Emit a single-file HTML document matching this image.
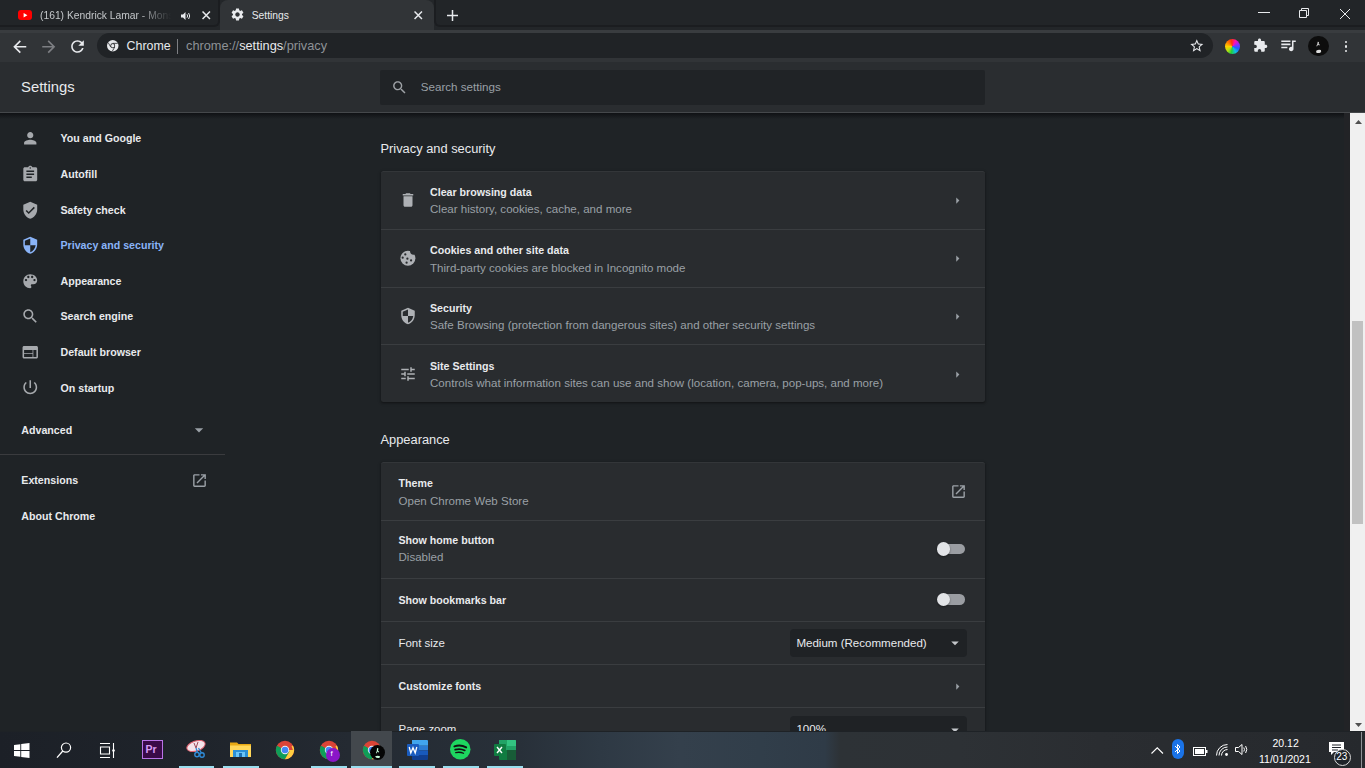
<!DOCTYPE html>
<html><head><meta charset="utf-8">
<style>
*{margin:0;padding:0;box-sizing:border-box}
html,body{width:1365px;height:768px;overflow:hidden;background:#1f2326;font-family:"Liberation Sans",sans-serif;color:#e8eaed}
.a{position:absolute}
.t{position:absolute;white-space:nowrap;line-height:1}
svg{position:absolute;display:block;overflow:visible}
#frame{left:0;top:0;width:1365px;height:30px;background:#232629}
#tab{left:220px;top:0;width:214px;height:31px;background:#313437;border-radius:8px 8px 0 0}
#toolbar{left:0;top:30px;width:1365px;height:32px;background:linear-gradient(#393c3f 0,#393c3f 3px,#313437 3px)}
#omni{left:96.5px;top:33px;width:1116px;height:25px;background:#202326;border-radius:12.5px}
#hdr{left:0;top:62px;width:1365px;height:51px;background:#2a2d30;border-bottom:1px solid #45484b}
#hdrshadow{left:0;top:113px;width:1344px;height:6px;background:linear-gradient(#0f1114,rgba(31,35,38,0))}
#search{left:380px;top:70px;width:605px;height:34.5px;background:#202326;border-radius:2px}
.nav{font-size:10.65px;font-weight:700;color:#e8eaed;left:60.5px}
.card{position:absolute;left:381px;width:604px;background:#292c2f;border-radius:2.5px;box-shadow:inset 0 1px 0 rgba(255,255,255,.05),0 1px 2px rgba(0,0,0,.3),0 1px 3px 1px rgba(0,0,0,.15)}
.sep{position:absolute;left:381px;width:604px;height:1px;background:#3a3d40}
.ttl{font-size:10.65px;font-weight:700;color:#e8eaed}
.sub{font-size:11.55px;color:#9aa0a6}
.hd{font-size:12.85px;color:#e8eaed}
#sb{left:1350px;top:112.5px;width:15px;height:620px;background:#f0f0f0}
#thumb{left:1352px;top:321px;width:11px;height:203px;background:#c1c1c1}
#task{left:0;top:732px;width:1365px;height:36px;background:linear-gradient(90deg,#1c2027 0,#1f242b 200px,#242a32 350px,#283039 520px,#2e3944 600px,#34404c 680px,#313e4a 760px,#2f3b47 825px,#2d3236 840px,#2d3135 960px,#2a2d31 1100px,#26292d 1365px)}
</style></head><body>
<div id="frame" class="a"></div>
<div class="a" style="left:-10px;top:-5px;width:230px;height:32px;border-right:2px solid #1b1d20;border-bottom:2.5px solid #1b1d20;border-bottom-right-radius:6px;background:#222528"></div>
<div class="a" style="left:434px;top:-5px;width:940px;height:32px;border-left:2.5px solid #1b1d20;border-bottom:2.5px solid #1b1d20;border-bottom-left-radius:6px;background:#222528"></div>
<div id="tab" class="a"></div>
<div id="toolbar" class="a"></div>
<div id="omni" class="a"></div>

<div class="a" style="left:18px;top:9.5px;width:14px;height:10.5px;background:#f00;border-radius:3px"></div>
<svg style="left:18px;top:9.5px" width="14" height="10.5" viewBox="0 0 14 10.5"><path fill="#fff" d="M5.6 3v4.5L9.4 5.25z"/></svg>
<div class="t" style="left:40px;top:10.8px;font-size:10.3px;color:#c4c7ca;width:134px;overflow:hidden;-webkit-mask-image:linear-gradient(90deg,#000 72%,transparent 98%)">(161) Kendrick Lamar - Monster (Official Video)</div>
<svg style="left:181px;top:11.5px" width="10" height="8" viewBox="0 0 10 8"><path fill="#e8eaed" d="M0 2.5h2L4.5 0v8L2 5.5H0z"/><path fill="none" stroke="#e8eaed" stroke-width="1" d="M6 2.3q1.2 1.7 0 3.4M7.6 1q2.2 3 0 6"/></svg>
<svg style="left:202px;top:11px" width="8.5" height="8.5" viewBox="0 0 8 8"><path stroke="#e8eaed" stroke-width="1.4" d="M0.5 .5l7 7M7.5 .5l-7 7"/></svg>
<svg style="left:229.8px;top:7.3px" width="15" height="15" viewBox="0 0 24 24"><path fill="#e8eaed" d="M19.14 12.94c.04-.3.06-.61.06-.94 0-.32-.02-.64-.07-.94l2.03-1.58c.18-.14.23-.41.12-.61l-1.92-3.32c-.12-.22-.37-.29-.59-.22l-2.39.96c-.5-.38-1.03-.7-1.62-.94l-.36-2.54c-.04-.24-.24-.41-.48-.41h-3.84c-.24 0-.43.17-.47.41l-.36 2.54c-.59.24-1.13.57-1.62.94l-2.390-.96c-.22-.08-.47 0-.59.22L2.74 8.87c-.12.21-.08.47.12.61l2.03 1.58c-.05.3-.09.63-.09.94s.02.64.07.94l-2.03 1.58c-.18.14-.23.41-.12.61l1.92 3.32c.12.22.37.29.59.22l2.39-.96c.5.38 1.03.7 1.62.94l.36 2.54c.05.24.24.41.48.41h3.84c.24 0 .44-.17.47-.41l.36-2.54c.59-.24 1.13-.56 1.62-.94l2.39.96c.22.08.47 0 .59-.22l1.92-3.32c.12-.22.07-.47-.12-.61l-2.01-1.58zM12 15.6c-1.98 0-3.6-1.62-3.6-3.6s1.62-3.6 3.6-3.6 3.6 1.62 3.6 3.6-1.62 3.6-3.6 3.6z"/></svg>
<div class="t" style="left:251.7px;top:10.8px;font-size:10.3px;color:#e8eaed">Settings</div>
<svg style="left:414.4px;top:10.8px" width="8.5" height="8.5" viewBox="0 0 8 8"><path stroke="#e8eaed" stroke-width="1.4" d="M0.5 .5l7 7M7.5 .5l-7 7"/></svg>
<svg style="left:447px;top:9.5px" width="11" height="11" viewBox="0 0 11 11"><path stroke="#e8eaed" stroke-width="1.5" d="M5.5 0v11M0 5.5h11"/></svg>
<div class="a" style="left:1258px;top:12px;width:12px;height:1px;background:#e8eaed"></div>
<svg style="left:1299px;top:8px" width="10" height="10" viewBox="0 0 10 10"><path fill="none" stroke="#e8eaed" stroke-width="1" d="M.5 2.5h7v7h-7z M2.5 2.5v-2h7v7h-2"/></svg>
<svg style="left:1340px;top:8.5px" width="10" height="10" viewBox="0 0 10 10"><path stroke="#e8eaed" stroke-width="1" d="M0 0l10 10M10 0L0 10"/></svg>
<svg style="left:9.75px;top:36.75px" width="19.5" height="19.5" viewBox="0 0 24 24"><path fill="#e8eaed" d="M20 11H7.83l5.59-5.59L12 4l-8 8 8 8 1.41-1.41L7.83 13H20v-2z"/></svg>
<svg style="left:38.5px;top:36.75px" width="19.5" height="19.5" viewBox="0 0 24 24"><path fill="#7d7f83" d="M12 4l-1.41 1.41L16.17 11H4v2h12.17l-5.58 5.59L12 20l8-8z"/></svg>
<svg style="left:67.6px;top:37.2px" width="19" height="19" viewBox="0 0 24 24"><path fill="#e8eaed" d="M17.65 6.35C16.2 4.9 14.21 4 12 4c-4.42 0-7.99 3.58-7.99 8s3.57 8 7.99 8c3.73 0 6.84-2.55 7.73-6h-2.08c-.82 2.33-3.04 4-5.65 4-3.31 0-6-2.69-6-6s2.69-6 6-6c1.66 0 3.14.69 4.22 1.78L13 11h7V4l-2.35 2.35z"/></svg>
<svg style="left:106.5px;top:40px" width="11.5" height="11.5" viewBox="0 0 24 24"><circle cx="12" cy="12" r="12" fill="#e8eaed"/><circle cx="12" cy="12" r="5" fill="#202124"/><circle cx="12" cy="12" r="3.4" fill="#e8eaed"/><path stroke="#202124" stroke-width="1.6" fill="none" d="M12 7h10.5M7.7 14.5L2.5 5.5M16.3 14.5L11 23.5"/></svg>
<div class="t" style="left:126.6px;top:40.1px;font-size:12.4px;color:#e8eaed">Chrome</div>
<div class="a" style="left:176.5px;top:38.5px;width:1px;height:15px;background:#7d7f83"></div>
<div class="t" style="left:186px;top:39.9px;font-size:12.75px;color:#8e9296">chrome://<span style="color:#e8eaed">settings</span>/privacy</div>
<svg style="left:1188.7px;top:38.3px" width="15.6" height="15.6" viewBox="0 0 24 24"><path fill="#e8eaed" d="M22 9.24l-7.19-.62L12 2 9.19 8.63 2 9.24l5.46 4.73L5.82 21 12 17.27 18.18 21l-1.63-7.03L22 9.24zM12 15.4l-3.76 2.27 1-4.28-3.32-2.88 4.38-.38L12 6.1l1.71 4.04 4.38.38-3.32 2.88 1 4.28L12 15.4z"/></svg>
<div class="a" style="left:1224.5px;top:38.5px;width:15px;height:15px;border-radius:50%;background:conic-gradient(from -10deg,#ff3010,#ff10b0,#8a2cff,#2060ff,#10c0e0,#20d040,#b8e010,#ffd000,#ff8000,#ff3010)"></div>
<svg style="left:1252.8px;top:38.4px" width="14.9" height="14.9" viewBox="0 0 24 24"><path fill="#e8eaed" d="M20.5 11H19V7c0-1.1-.9-2-2-2h-4V3.5C13 2.12 11.88 1 10.5 1S8 2.12 8 3.5V5H4c-1.1 0-1.99.9-1.99 2v3.8H3.5c1.49 0 2.7 1.21 2.7 2.7s-1.21 2.7-2.7 2.7H2V20c0 1.1.9 2 2 2h3.8v-1.5c0-1.49 1.21-2.7 2.7-2.7 1.49 0 2.7 1.21 2.7 2.7V22H17c1.1 0 2-.9 2-2v-4h1.5c1.38 0 2.5-1.12 2.5-2.5S21.88 11 20.5 11z"/></svg>
<svg style="left:1279.2px;top:35.7px" width="18.3" height="18.3" viewBox="0 0 24 24"><path fill="#e8eaed" d="M15 6H3v2h12V6zm0 4H3v2h12v-2zM3 16h8v-2H3v2zM17 6v8.18c-.31-.11-.65-.18-1-.18-1.66 0-3 1.34-3 3s1.34 3 3 3 3-1.34 3-3V8h3V6h-5z"/></svg>
<div class="a" style="left:1308px;top:35.5px;width:20.5px;height:20.5px;border-radius:50%;background:#0d0d0d"></div>
<svg style="left:1308px;top:35.5px" width="20.5" height="20.5" viewBox="0 0 20 20"><path fill="#ddd" d="M9.5 5.5l1.2 .3-.3 1.6 1.2 1.5-.8.4-1-1-.9 1.8h-.8l1-2.3z M8 14.5q2-1.5 4.5-.8q1 1.5-.5 2.6q-2.5.8-4-.3z"/></svg>
<div class="a" style="left:1344.8px;top:40.5px;width:2.6px;height:2.6px;border-radius:50%;background:#e8eaed"></div>
<div class="a" style="left:1344.8px;top:45px;width:2.6px;height:2.6px;border-radius:50%;background:#e8eaed"></div>
<div class="a" style="left:1344.8px;top:49.5px;width:2.6px;height:2.6px;border-radius:50%;background:#e8eaed"></div>
<div id="hdr" class="a"></div>
<div id="hdrshadow" class="a"></div>
<div id="search" class="a"></div>
<div class="t" style="left:21px;top:80.1px;font-size:14.83px">Settings</div>
<svg style="left:390.5px;top:78.6px" width="17" height="17" viewBox="0 0 24 24"><path fill="#9ea2a6" d="M15.5 14h-.79l-.28-.27C15.41 12.59 16 11.110 16 9.5 16 5.91 13.09 3 9.5 3S3 5.91 3 9.5 5.91 16 9.5 16c1.61 0 3.09-.59 4.23-1.57l.27.28v.79l5 4.99L20.49 19l-4.99-5zm-6 0C7.01 14 5 11.99 5 9.5S7.01 5 9.5 5 14 7.01 14 9.5 11.99 14 9.5 14z"/></svg>
<div class="t" style="left:420.8px;top:81.2px;font-size:11.6px;color:#9aa0a6">Search settings</div>

<!-- SIDEBAR -->
<div class="t nav" style="top:133.4px">You and Google</div>
<div class="t nav" style="top:169.3px">Autofill</div>
<div class="t nav" style="top:204.7px">Safety check</div>
<div class="t nav" style="top:240.3px;color:#8ab4f8">Privacy and security</div>
<div class="t nav" style="top:275.7px">Appearance</div>
<div class="t nav" style="top:310.9px">Search engine</div>
<div class="t nav" style="top:346.8px">Default browser</div>
<div class="t nav" style="top:382.6px">On startup</div>
<div class="t nav" style="top:424.7px;left:21.3px">Advanced</div>
<div class="t nav" style="top:475.2px;left:21.3px">Extensions</div>
<div class="t nav" style="top:511.2px;left:21.3px">About Chrome</div>
<div class="a" style="left:0;top:454px;width:225px;height:1px;background:#3a3b3e"></div>

<!-- MAIN -->
<div class="t hd" style="left:380.5px;top:143px">Privacy and security</div>
<div class="card" style="top:171px;height:231px"></div>
<div class="sep" style="top:229px"></div>
<div class="sep" style="top:287px"></div>
<div class="sep" style="top:344px"></div>
<div class="t ttl" style="left:430px;top:186.9px">Clear browsing data</div>
<div class="t sub" style="left:430px;top:204.3px">Clear history, cookies, cache, and more</div>
<div class="t ttl" style="left:430px;top:244.7px">Cookies and other site data</div>
<div class="t sub" style="left:430px;top:262.9px">Third-party cookies are blocked in Incognito mode</div>
<div class="t ttl" style="left:430px;top:303.4px">Security</div>
<div class="t sub" style="left:430px;top:320.3px">Safe Browsing (protection from dangerous sites) and other security settings</div>
<div class="t ttl" style="left:430px;top:360.9px">Site Settings</div>
<div class="t sub" style="left:430px;top:378.3px">Controls what information sites can use and show (location, camera, pop-ups, and more)</div>

<div class="t hd" style="left:380.5px;top:433.5px">Appearance</div>
<div class="card" style="top:462px;height:320px"></div>
<div class="sep" style="top:520px"></div>
<div class="sep" style="top:578px"></div>
<div class="sep" style="top:621px"></div>
<div class="sep" style="top:664px"></div>
<div class="sep" style="top:707px"></div>
<div class="t ttl" style="left:398.5px;top:478.3px">Theme</div>
<div class="t sub" style="left:398.5px;top:495.5px">Open Chrome Web Store</div>
<div class="t ttl" style="left:398.5px;top:535.3px">Show home button</div>
<div class="t sub" style="left:398.5px;top:552.3px">Disabled</div>
<div class="t ttl" style="left:398.5px;top:595.4px">Show bookmarks bar</div>
<div class="t" style="left:398.5px;top:637.9px;font-size:11.45px">Font size</div>
<div class="t ttl" style="left:398.5px;top:681.4px">Customize fonts</div>
<div class="t" style="left:398.5px;top:723.9px;font-size:11.45px">Page zoom</div>

<div class="a" style="left:790px;top:629px;width:177px;height:28px;background:#1f2225;border-radius:4px"></div>
<div class="t" style="left:796.4px;top:637.9px;font-size:11.56px">Medium (Recommended)</div>
<div class="a" style="left:790px;top:716px;width:177px;height:28px;background:#1f2225;border-radius:4px"></div>
<div class="t" style="left:796.4px;top:723.9px;font-size:11.56px">100%</div>

<svg style="left:20.75px;top:129.25px" width="18.5" height="18.5" viewBox="0 0 24 24"><path fill="#a6a9ad" d="M12 12c2.21 0 4-1.790 4-4s-1.79-4-4-4-4 1.79-4 4 1.79 4 4 4zm0 2c-2.670 0-8 1.34-8 4v2h16v-2c0-2.66-5.33-4-8-4z"/></svg>
<svg style="left:20.75px;top:165.15px" width="18.5" height="18.5" viewBox="0 0 24 24"><path fill="#a6a9ad" d="M19 3h-4.18C14.4 1.84 13.3 1 12 1c-1.3 0-2.4.84-2.82 2H5c-1.1 0-2 .9-2 2v14c0 1.1.9 2 2 2h14c1.1 0 2-.9 2-2V5c0-1.1-.9-2-2-2zm-7 0c.55 0 1 .45 1 1s-.45 1-1 1-1-.45-1-1 .45-1 1-1zm2 14H7v-2h7v2zm3-4H7v-2h10v2zm0-4H7V7h10v2z"/></svg>
<svg style="left:20.75px;top:200.55px" width="18.5" height="18.5" viewBox="0 0 24 24"><path fill="#a6a9ad" d="M12 1L3 5v6c0 5.55 3.84 10.74 9 12 5.16-1.26 9-6.45 9-12V5l-9-4zm-2 16l-4-4 1.41-1.41L10 14.17l6.59-6.59L18 9l-8 8z"/></svg>
<svg style="left:20.75px;top:236.15px" width="18.5" height="18.5" viewBox="0 0 24 24"><path fill="#8ab4f8" d="M12 1L3 5v6c0 5.55 3.84 10.74 9 12 5.16-1.26 9-6.45 9-12V5l-9-4zm0 10.99h7c-.53 4.12-3.28 7.79-7 8.94V12H5V6.3l7-3.11v8.8z"/></svg>
<svg style="left:20.75px;top:271.55px" width="18.5" height="18.5" viewBox="0 0 24 24"><path fill="#a6a9ad" d="M12 3c-4.97 0-9 4.03-9 9s4.03 9 9 9c.83 0 1.5-.67 1.5-1.5 0-.39-.15-.74-.39-1.01-.23-.26-.38-.61-.38-.99 0-.83.67-1.5 1.5-1.5H16c2.76 0 5-2.24 5-5 0-4.42-4.03-8-9-8zm-5.5 9c-.83 0-1.5-.67-1.5-1.5S5.67 9 6.5 9 8 9.67 8 10.5 7.33 12 6.5 12zm3-4C8.67 8 8 7.33 8 6.5S8.67 5 9.5 5s1.5.67 1.5 1.5S10.33 8 9.5 8zm5 0c-.83 0-1.5-.67-1.5-1.5S13.67 5 14.5 5s1.5.67 1.5 1.5S15.33 8 14.5 8zm3 4c-.83 0-1.5-.67-1.5-1.5S16.67 9 17.5 9s1.5.67 1.5 1.5-.67 1.5-1.5 1.5z"/></svg>
<svg style="left:20.75px;top:306.75px" width="18.5" height="18.5" viewBox="0 0 24 24"><path fill="#a6a9ad" d="M15.5 14h-.79l-.28-.27C15.41 12.59 16 11.11 16 9.5 16 5.91 13.09 3 9.5 3S3 5.91 3 9.5 5.91 16 9.5 16c1.61 0 3.09-.59 4.23-1.57l.27.28v.79l5 4.99L20.49 19l-4.99-5zm-6 0C7.01 14 5 11.99 5 9.5S7.01 5 9.5 5 14 7.01 14 9.5 11.99 14 9.5 14z"/></svg>
<svg style="left:20.75px;top:342.65px" width="18.5" height="18.5" viewBox="0 0 24 24"><path fill="#a6a9ad" d="M20 4H4c-1.1 0-1.99.9-1.99 2L2 18c0 1.1.9 2 2 2h16c1.1 0 2-.9 2-2V6c0-1.1-.9-2-2-2zm-5 14H4v-4h11v4zm0-5H4V9h11v4zm5 5h-4V9h4v9z"/></svg>
<svg style="left:20.75px;top:378.45px" width="18.5" height="18.5" viewBox="0 0 24 24"><path fill="#a6a9ad" d="M13 3h-2v10h2V3zm4.83 2.17l-1.42 1.42C17.99 7.86 19 9.81 19 12c0 3.87-3.13 7-7 7s-7-3.13-7-7c0-2.19 1.01-4.14 2.58-5.42L6.17 5.17C4.23 6.82 3 9.26 3 12c0 4.97 4.03 9 9 9s9-4.03 9-9c0-2.74-1.23-5.18-3.17-6.83z"/></svg>
<svg style="left:189px;top:420px" width="20" height="20" viewBox="0 0 24 24"><path fill="#9aa0a6" d="M7 10l5 5 5-5z"/></svg>
<svg style="left:191.3px;top:472px" width="17" height="17" viewBox="0 0 24 24"><path fill="#9aa0a6" d="M19 19H5V5h7V3H5c-1.11 0-2 .9-2 2v14c0 1.1.89 2 2 2h14c1.1 0 2-.9 2-2v-7h-2v7zM14 3v2h3.59l-9.83 9.83 1.41 1.41L19 6.41V10h2V3h-7z"/></svg>
<svg style="left:398.5px;top:191.00px" width="18" height="18" viewBox="0 0 24 24"><path fill="#aeb1b5" d="M6 19c0 1.1.9 2 2 2h8c1.1 0 2-.9 2-2V7H6v12zM19 4h-3.5l-1-1h-5l-1 1H5v2h14V4z"/></svg>
<svg style="left:398.5px;top:249px" width="18" height="18" viewBox="0 0 24 24"><defs><mask id="ck"><rect width="24" height="24" fill="#fff"/><circle cx="19.5" cy="2.8" r="4.8" fill="#000"/><circle cx="4.9" cy="11.6" r="1.5" fill="#000"/><circle cx="8.4" cy="7.2" r="1.5" fill="#000"/><circle cx="11.2" cy="12.9" r="1.5" fill="#000"/><circle cx="10.1" cy="18.3" r="1.5" fill="#000"/><circle cx="16.1" cy="15.2" r="1.5" fill="#000"/></mask></defs><circle cx="11.9" cy="12.4" r="10" fill="#aeb1b5" mask="url(#ck)"/></svg>
<svg style="left:398.5px;top:307.00px" width="18" height="18" viewBox="0 0 24 24"><path fill="#aeb1b5" d="M12 1L3 5v6c0 5.55 3.84 10.74 9 12 5.16-1.26 9-6.45 9-12V5l-9-4zm0 10.99h7c-.53 4.12-3.28 7.79-7 8.94V12H5V6.3l7-3.11v8.8z"/></svg>
<svg style="left:398.5px;top:365.00px" width="18" height="18" viewBox="0 0 24 24"><path fill="#aeb1b5" d="M3 17v2h6v-2H3zM3 5v2h10V5H3zm10 16v-2h8v-2h-8v-2h-2v6h2zM7 9v2H3v2h4v2h2V9H7zm14 4v-2H11v2h10zm-6-4h2V7h4V5h-4V3h-2v6z"/></svg>
<svg style="left:949.5px;top:192.50px" width="15" height="15" viewBox="0 0 24 24"><path fill="#9aa0a6" d="M10 7l5 5-5 5z"/></svg>
<svg style="left:949.5px;top:250.50px" width="15" height="15" viewBox="0 0 24 24"><path fill="#9aa0a6" d="M10 7l5 5-5 5z"/></svg>
<svg style="left:949.5px;top:308.50px" width="15" height="15" viewBox="0 0 24 24"><path fill="#9aa0a6" d="M10 7l5 5-5 5z"/></svg>
<svg style="left:949.5px;top:366.50px" width="15" height="15" viewBox="0 0 24 24"><path fill="#9aa0a6" d="M10 7l5 5-5 5z"/></svg>
<svg style="left:949.5px;top:678.50px" width="15" height="15" viewBox="0 0 24 24"><path fill="#9aa0a6" d="M10 7l5 5-5 5z"/></svg>
<svg style="left:949.9px;top:482.5px" width="17" height="17" viewBox="0 0 24 24"><path fill="#9aa0a6" d="M19 19H5V5h7V3H5c-1.11 0-2 .9-2 2v14c0 1.1.89 2 2 2h14c1.1 0 2-.9 2-2v-7h-2v7zM14 3v2h3.59l-9.83 9.83 1.41 1.41L19 6.41V10h2V3h-7z"/></svg>
<svg style="left:946px;top:634px" width="18" height="18" viewBox="0 0 24 24"><path fill="#c4c7cb" d="M7 10l5 5 5-5z"/></svg>
<svg style="left:946px;top:721px" width="18" height="18" viewBox="0 0 24 24"><path fill="#c4c7cb" d="M7 10l5 5 5-5z"/></svg>
<div class="a" style="left:941px;top:543.75px;width:23.5px;height:10.5px;border-radius:5.25px;background:#9a9da2"></div>
<div class="a" style="left:936.5px;top:542.25px;width:13.6px;height:13.6px;border-radius:50%;background:#e2e4e7;box-shadow:0 1px 2px rgba(0,0,0,.4)"></div>
<div class="a" style="left:941px;top:594.15px;width:23.5px;height:10.5px;border-radius:5.25px;background:#9a9da2"></div>
<div class="a" style="left:936.5px;top:592.65px;width:13.6px;height:13.6px;border-radius:50%;background:#e2e4e7;box-shadow:0 1px 2px rgba(0,0,0,.4)"></div>
<div class="a" style="left:1344px;top:113px;width:6px;height:618px;background:#222326"></div>
<div id="sb" class="a"></div>
<div id="thumb" class="a"></div>
<svg style="left:1354.5px;top:119.5px" width="7" height="4" viewBox="0 0 7 4"><path fill="#505050" d="M0 4L3.5 0L7 4z"/></svg>
<svg style="left:1354.5px;top:723px" width="7" height="4" viewBox="0 0 7 4"><path fill="#505050" d="M0 0L3.5 4L7 0z"/></svg>
<div class="a" style="left:0;top:731px;width:1365px;height:1px;background:#1e2226"></div>
<div id="task" class="a"></div>
<svg style="left:13.5px;top:742.5px" width="15.5" height="15" viewBox="0 0 15.5 15"><path fill="#fff" d="M0 2.1L6.3 1.2V7H0zM7.2 1.1L15.5 0V7H7.2zM0 7.9H6.3V13.8L0 12.9zM7.2 7.9H15.5V15L7.2 13.9z"/></svg>
<svg style="left:56px;top:742px" width="16" height="17" viewBox="0 0 16 17"><circle cx="10" cy="5.6" r="4.6" fill="none" stroke="#fff" stroke-width="1.2"/><path stroke="#fff" stroke-width="1.3" d="M6.8 9L1 15.6"/></svg>
<svg style="left:98.5px;top:742.5px" width="16" height="15" viewBox="0 0 16 15"><path fill="none" stroke="#fff" stroke-width="1.1" d="M1 .5h10M1 14.5h10M1.5 4h9v7h-9z M14.5 0v15"/><circle cx="14.5" cy="7.5" r="1.3" fill="#fff"/></svg>
<div class="a" style="left:142px;top:739.5px;width:20.5px;height:19.5px;background:#3a0a48;border:1.6px solid #b873e6"></div>
<div class="t" style="left:145.5px;top:744px;font-size:10.5px;font-weight:700;color:#d99cf5">Pr</div>
<svg style="left:185px;top:738px" width="23" height="22" viewBox="0 0 23 22"><ellipse cx="11" cy="8" rx="9.5" ry="5" transform="rotate(-18 11 8)" fill="#f4e4ea" stroke="#e0606e" stroke-width="1"/><path stroke="#9c4a5a" stroke-width="1" d="M9 5l2 5M13 4l-2 6"/><circle cx="12" cy="16.5" r="2.2" fill="none" stroke="#2f8bd8" stroke-width="1.4"/><circle cx="17" cy="17" r="2.2" fill="none" stroke="#2f8bd8" stroke-width="1.4"/><path stroke="#2f8bd8" stroke-width="1.3" d="M11 10l1.5 4.5M13.5 10l3 5"/></svg>
<svg style="left:229.5px;top:741px" width="21" height="17" viewBox="0 0 21 17"><path fill="#e8a914" d="M0 1.5h7l1.5 1.5H21v13H0z"/><path fill="#ffd75a" d="M0 4.5h21V16H0z"/><path fill="#2a8fd6" d="M3 9h15v7H3z"/><path fill="#6cc5f5" d="M6 11h9v5H6z"/><path fill="#1a6fb5" d="M9 12h3v4H9z"/></svg>
<svg style="left:274.5px;top:740px" width="20" height="20" viewBox="0 0 48 48"><circle cx="24" cy="24" r="22" fill="#db4437"/><path fill="#0f9d58" d="M24 24L5 13A22 22 0 0 0 24 46L35 27z"/><path fill="#ffcd40" d="M24 24L35 27L24 46A22 22 0 0 0 43 13z"/><path fill="#db4437" d="M24 24H43A22 22 0 0 0 5 13z"/><circle cx="24" cy="24" r="10" fill="#f1f1f1"/><circle cx="24" cy="24" r="8" fill="#4285f4"/></svg>
<svg style="left:319px;top:740px" width="20" height="20" viewBox="0 0 48 48"><circle cx="24" cy="24" r="22" fill="#db4437"/><path fill="#0f9d58" d="M24 24L5 13A22 22 0 0 0 24 46L35 27z"/><path fill="#ffcd40" d="M24 24L35 27L24 46A22 22 0 0 0 43 13z"/><path fill="#db4437" d="M24 24H43A22 22 0 0 0 5 13z"/><circle cx="24" cy="24" r="10" fill="#f1f1f1"/><circle cx="24" cy="24" r="8" fill="#4285f4"/></svg>
<div class="a" style="left:325.5px;top:747.5px;width:14px;height:14px;border-radius:50%;background:#8a16c8"></div>
<div class="t" style="left:330.5px;top:750px;font-size:8px;color:#fff">f</div>
<div class="a" style="left:351px;top:731px;width:40.5px;height:37px;background:#43484d"></div>
<svg style="left:361.5px;top:740px" width="20" height="20" viewBox="0 0 48 48"><circle cx="24" cy="24" r="22" fill="#db4437"/><path fill="#0f9d58" d="M24 24L5 13A22 22 0 0 0 24 46L35 27z"/><path fill="#ffcd40" d="M24 24L35 27L24 46A22 22 0 0 0 43 13z"/><path fill="#db4437" d="M24 24H43A22 22 0 0 0 5 13z"/><circle cx="24" cy="24" r="10" fill="#f1f1f1"/><circle cx="24" cy="24" r="8" fill="#4285f4"/></svg>
<div class="a" style="left:370px;top:745px;width:15px;height:15px;border-radius:50%;background:#050505"></div>
<svg style="left:370px;top:745px" width="15" height="15" viewBox="0 0 15 15"><path fill="#cfd" d="M7 3l1.5.5-.5 2 1.3 1.5-.8.5-1-1-.7 1.7h-.8l.8-2.5z M5 11.5q2.5-1.5 5-.3q.3 1.4-1.3 1.9q-2.5.2-3.7-1.6z"/></svg>
<svg style="left:406.5px;top:739.5px" width="21" height="20" viewBox="0 0 21 20"><path fill="#41a5ee" d="M5 0h15a1 1 0 0 1 1 1v4.7H5z"/><path fill="#2b7cd3" d="M5 5.7h16v4.7H5z"/><path fill="#185abd" d="M5 10.4h16v4.7H5z"/><path fill="#103f91" d="M5 15.1h16V19a1 1 0 0 1-1 1H6a1 1 0 0 1-1-1z"/><rect x="0" y="4" width="12" height="12" rx="1" fill="#1a5cbf"/><path fill="none" stroke="#fff" stroke-width="1.3" d="M2.2 7l1.6 6 2.2-5.3 2.2 5.3 1.6-6"/></svg>
<svg style="left:450px;top:739.3px" width="20.5" height="20.5" viewBox="0 0 20 20"><circle cx="10" cy="10" r="10" fill="#1ed760"/><path fill="none" stroke="#111" stroke-linecap="round" stroke-width="1.9" d="M4.3 7.2q6-2 11.5 1"/><path fill="none" stroke="#111" stroke-linecap="round" stroke-width="1.6" d="M5 10.4q5-1.5 9.5.8"/><path fill="none" stroke="#111" stroke-linecap="round" stroke-width="1.3" d="M5.6 13.3q4-1 7.6.6"/></svg>
<svg style="left:493.5px;top:739.5px" width="22" height="20" viewBox="0 0 22 20"><path fill="#21a366" d="M5 0h16a1 1 0 0 1 1 1v9H5z"/><path fill="#33c481" d="M13 0h8a1 1 0 0 1 1 1v5h-9z"/><path fill="#107c41" d="M5 10h17v9a1 1 0 0 1-1 1H6a1 1 0 0 1-1-1z"/><path fill="#185c37" d="M13 10h9v9a1 1 0 0 1-1 1h-8z"/><rect x="0" y="4" width="12" height="12" rx="1" fill="#107c41"/><path stroke="#fff" stroke-width="1.4" d="M3 7l5 6M8 7l-5 6"/></svg>
<div class="a" style="left:178.6px;top:766px;width:35.599999999999994px;height:2px;background:#99ddee"></div>
<div class="a" style="left:222.8px;top:766px;width:35.80000000000001px;height:2px;background:#99ddee"></div>
<div class="a" style="left:311px;top:766px;width:35.80000000000001px;height:2px;background:#99ddee"></div>
<div class="a" style="left:351px;top:766px;width:40.5px;height:2px;background:#99ddee"></div>
<div class="a" style="left:399.2px;top:766px;width:35.900000000000034px;height:2px;background:#99ddee"></div>
<div class="a" style="left:442.8px;top:766px;width:36.39999999999998px;height:2px;background:#99ddee"></div>
<div class="a" style="left:486.9px;top:766px;width:36.39999999999998px;height:2px;background:#99ddee"></div>
<svg style="left:1150.5px;top:746.5px" width="12.5" height="7" viewBox="0 0 12.5 7"><path fill="none" stroke="#fff" stroke-width="1.1" d="M.5 6.5l5.75-5.75L12 6.5"/></svg>
<div class="a" style="left:1172px;top:739px;width:11.5px;height:20px;border-radius:6px;background:#1a73e8"></div>
<svg style="left:1172px;top:739px" width="11.5" height="20" viewBox="0 0 11.5 20"><path fill="none" stroke="#fff" stroke-width="1" d="M3 7l5 5-2.5 2.5V5.5L8 8 3 13"/></svg>
<svg style="left:1192.5px;top:746.5px" width="15" height="9" viewBox="0 0 15 9"><rect x=".5" y=".5" width="12" height="8" fill="none" stroke="#fff" stroke-width="1"/><rect x="2" y="2" width="9" height="5" fill="#fff"/><rect x="13" y="3" width="1.5" height="3" fill="#fff"/></svg>
<svg style="left:1216px;top:743.5px" width="13" height="12" viewBox="0 0 13 12"><path fill="none" stroke="#fff" stroke-width="1" d="M.5 11.5A11 11 0 0 1 11.5 .5M3 11.5A8.5 8.5 0 0 1 11.5 3M5.5 11.5A6 6 0 0 1 11.5 5.5"/><circle cx="10.5" cy="10.5" r="1.4" fill="#fff"/></svg>
<svg style="left:1235px;top:744px" width="13" height="11" viewBox="0 0 13 11"><path fill="none" stroke="#fff" stroke-width="1" d="M.5 3.5h3L7 .5v10L3.5 7.5h-3z M8.8 3.5q1.3 2 0 4M10.6 2q2.4 3.5 0 7"/></svg>
<div class="t" style="left:1272.5px;top:737.5px;font-size:10.5px;color:#fff">20.12</div>
<div class="t" style="left:1259px;top:753.5px;font-size:10.5px;color:#fff">11/01/2021</div>
<svg style="left:1328.5px;top:742px" width="16" height="13" viewBox="0 0 16 13"><path fill="#fff" d="M0 0h15v10H5l-3 3v-3H0z"/><path stroke="#1e2329" stroke-width="1" d="M3 3h9M3 5.5h9M3 8h6"/></svg>
<div class="a" style="left:1334px;top:748.5px;width:17px;height:17px;border-radius:50%;background:#1e2329;border:1.3px solid #d8d8d8"></div>
<div class="t" style="left:1336.2px;top:752px;font-size:10px;color:#fff">23</div>
<div class="a" style="left:1361px;top:732px;width:1px;height:36px;background:#8d9094"></div>
</body></html>
